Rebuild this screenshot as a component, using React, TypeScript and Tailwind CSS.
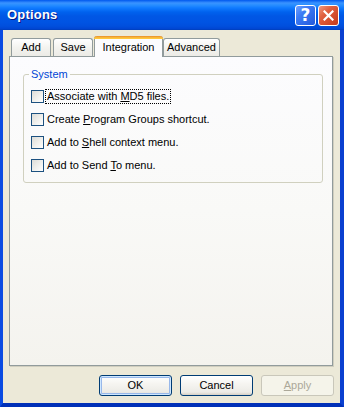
import React from 'react';

// Checkbox XP (Luna)
const XpCheck: React.FC<{ children: React.ReactNode; focused?: boolean }> = ({ children, focused }) => (
  <div className="flex items-center h-[23px]">
    <div className="w-[13px] h-[13px] border border-[#1C5180] bg-[linear-gradient(135deg,#DCDCD7_0%,#F2F2EF_60%,#FFFFFF_100%)]" />
    <span
      className={`ml-[2px] px-[1px] leading-[13px] ${focused ? 'outline-1 outline-dotted outline-black outline-offset-0' : ''}`}
    >
      {children}
    </span>
  </div>
);

const XpButton: React.FC<{ children: React.ReactNode; primary?: boolean; disabled?: boolean }> = ({
  children,
  primary,
  disabled,
}) => {
  if (disabled) {
    return (
      <div className="w-[73px] h-[21px] rounded-[3px] border border-[#C9C7BA] bg-[#F5F4EA] flex items-center justify-center text-[#ACA899]">
        {children}
      </div>
    );
  }
  return (
    <div
      className={`w-[73px] h-[21px] rounded-[3px] border border-[#003C74] bg-[linear-gradient(to_bottom,#FFFFFF_0%,#F6F5F1_40%,#ECEBE6_85%,#D6D0C5_100%)] flex items-center justify-center text-black ${
        primary ? 'shadow-[inset_0_0_0_1px_#CEE7FF,inset_0_0_0_2px_#98B8EA]' : ''
      }`}
    >
      {children}
    </div>
  );
};

const Tab: React.FC<{ label: string; width: string; selected?: boolean; className?: string }> = ({
  label,
  width,
  selected,
  className = '',
}) => {
  if (selected) {
    return (
      <div
        className={`${width} ${className} h-[21px] -mb-px relative z-10 rounded-t-[3px] border-x border-[#919B9C] bg-[#FCFCFE] flex flex-col`}
      >
        <div className="h-[3px] rounded-t-[3px] bg-[linear-gradient(to_bottom,#E68B2C_0%,#FFC73C_70%,#FFC73C_100%)] -mx-px" />
        <div className="flex-1 flex items-center justify-center pb-[1px] text-black">{label}</div>
      </div>
    );
  }
  return (
    <div
      className={`${width} ${className} h-[18px] rounded-t-[3px] border-x border-t border-[#919B9C] bg-[linear-gradient(to_bottom,#FFFFFF_0%,#F3F3EF_50%,#ECEBE6_100%)] flex items-center justify-center text-black`}
    >
      {label}
    </div>
  );
};

export default function App() {
  return (
    <div className="w-[344px] h-[407px] flex flex-col font-['Liberation_Sans',Arial,sans-serif] text-[11px] select-none">
      {/* Barra de título */}
      <div className="h-[30px] flex items-center pl-[7px] pr-[5px] bg-[linear-gradient(to_bottom,#0058EE_0px,#3A93FF_3px,#288EFF_5px,#0F7AFF_8px,#0062EE_12px,#0057E5_16px,#0054E3_22px,#004FDD_26px,#0045D2_29px,#003DB2_30px)]">
        <span className="text-white font-bold text-[13px] [text-shadow:1px_1px_0_#0A1883] tracking-[0.2px]">
          Options
        </span>
        <div className="ml-auto flex items-center gap-[2px] mt-[1px]">
          <div className="w-[21px] h-[21px] rounded-[3px] border border-white bg-[linear-gradient(135deg,#6FA0FF_0%,#3C7CF5_35%,#2358DB_100%)] flex items-center justify-center">
            <span className="text-white font-bold text-[17px] leading-none font-['DejaVu_Sans',sans-serif]">?</span>
          </div>
          <div className="w-[21px] h-[21px] rounded-[3px] border border-white bg-[linear-gradient(135deg,#F0997F_0%,#E0603F_35%,#C4391B_100%)] flex items-center justify-center">
            <svg width="11" height="11" viewBox="0 0 11 11">
              <path d="M1.5 1.5 L9.5 9.5 M9.5 1.5 L1.5 9.5" stroke="white" strokeWidth="2.2" strokeLinecap="square" />
            </svg>
          </div>
        </div>
      </div>

      {/* Cuerpo */}
      <div className="flex-1 flex flex-col bg-[#ECE9D8] border-l-[3px] border-r-[4px] border-b-[4px] border-l-[#0A4BE2] border-r-[#0A40D0] border-b-[#0030B8] pl-[6px] pt-[6px]">
        {/* Pestañas */}
        <div className="flex items-end h-[20px] pl-[2px]">
          <Tab label="Add" width="w-[40px]" />
          <Tab label="Save" width="w-[40px]" className="ml-[2px]" />
          <Tab label="Integration" width="w-[69px]" selected className="ml-[1px]" />
          <Tab label="Advanced" width="w-[57px]" />
        </div>

        {/* Página */}
        <div className="w-[324px] h-[310px] border border-[#919B9C] bg-[linear-gradient(to_bottom,#FCFCFE_0%,#F9F9F7_50%,#F4F3EE_100%)] shadow-[1px_1px_0_#D0CEBF] pt-[11px] pl-[13px]">
          <fieldset className="w-[300px] h-[115px] border border-[#D0D0BF] rounded-[3px] pt-[4px]">
            <legend className="ml-[5px] px-[2px] text-[#0046D5] leading-[13px]">System</legend>
            <div className="pl-[7px]">
              <XpCheck focused>
                Associate with <u>M</u>D5 files.
              </XpCheck>
              <XpCheck>
                Create <u>P</u>rogram Groups shortcut.
              </XpCheck>
              <XpCheck>
                Add to <u>S</u>hell context menu.
              </XpCheck>
              <XpCheck>
                Add to Send <u>T</u>o menu.
              </XpCheck>
            </div>
          </fieldset>
        </div>

        {/* Botones */}
        <div className="flex gap-[8px] mt-[9px] pl-[90px]">
          <XpButton primary>OK</XpButton>
          <XpButton>Cancel</XpButton>
          <XpButton disabled>
            <u>A</u>pply
          </XpButton>
        </div>
      </div>
    </div>
  );
}
